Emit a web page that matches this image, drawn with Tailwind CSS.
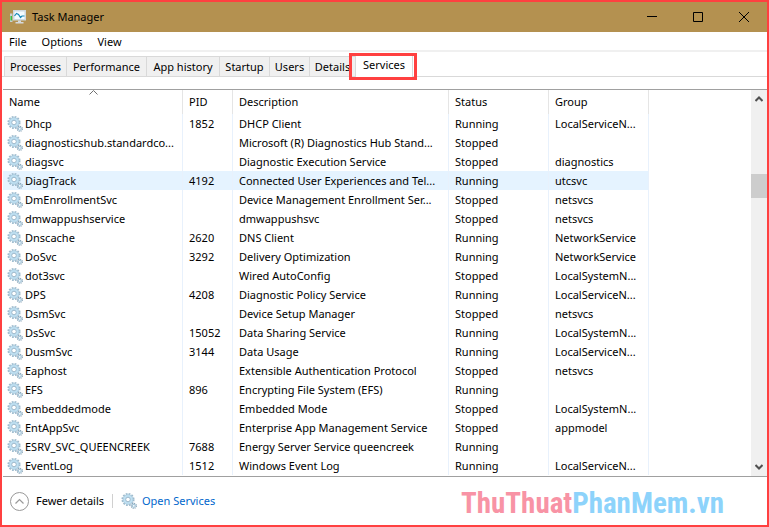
<!DOCTYPE html>
<html lang="en">
<head>
    <meta charset="UTF-8">
    <meta name="viewport" content="width=device-width, initial-scale=1.0">
    <title>Task Manager</title>
    <script src="https://cdn.jsdelivr.net/npm/@tailwindcss/browser@4"></script>
</head>
<body class="bg-white">
    <!-- shared gear icon -->
    <svg class="hidden">
        <symbol id="gear" viewBox="0 0 16 16">
            <circle cx="7" cy="6.5" r="5.7" fill="none" stroke="#9dbacd" stroke-width="1.7" stroke-dasharray="1.8 1.18"/>
            <circle cx="7" cy="6.5" r="3.8" fill="none" stroke="#bfe0f2" stroke-width="2.6"/>
            <circle cx="7" cy="6.5" r="4.9" fill="none" stroke="#9fc0d4" stroke-width=".6"/>
            <circle cx="7" cy="6.5" r="2.3" fill="#fff" stroke="#7fa3bc" stroke-width=".8"/>
            <circle cx="12.8" cy="12.8" r="2.5" fill="none" stroke="#8ba5b8" stroke-width="1.3" stroke-dasharray="1.1 .86"/>
            <circle cx="12.8" cy="12.8" r="1.5" fill="#fff" stroke="#a5c6da" stroke-width="1.2"/>
        </symbol>
    </svg>

    <div class="flex min-h-screen flex-col border-2 border-[#ff4040] bg-white font-['Noto_Sans','Open_Sans',sans-serif] text-[11px] leading-4 text-black">
        <header class="flex h-[30px] items-center bg-[#b49150] pl-2">
            <svg class="h-4 w-4 shrink-0" viewBox="0 0 16 16">
                <path d="M0 4.500h2.500v8.500H0z" fill="#c9cfd2"/>
                <path d="M.5 7h1.500v4.500H.5z" fill="#33c241"/>
                <path d="M3 1h13v10.500H3z" fill="#cfd8dd"/>
                <path d="M4.500 2.500h10v7.500h-10z" fill="#f3fbff"/>
                <path d="M4.500 7 6.500 4.500l2 1 2 3 1.500-1.500h2.500" fill="none" stroke="#1686b5" stroke-width="1.200"/>
                <path d="M8 11.500h3V13h2.500v1.500H5.500V13H8z" fill="#d5dadd"/>
            </svg>
            <h1 class="ml-1.5">Task Manager</h1>
            <div class="ml-auto flex h-full">
                <button class="flex w-[46px] items-center justify-center" aria-label="Minimize">
                    <svg class="h-[10px] w-[10px]" viewBox="0 0 10 10" stroke="#000"><path d="M0 4.500h10"/></svg>
                </button>
                <button class="flex w-[46px] items-center justify-center" aria-label="Maximize">
                    <svg class="h-[10px] w-[10px]" viewBox="0 0 10 10" fill="none" stroke="#000"><path d="M.5.5h9v9h-9z"/></svg>
                </button>
                <button class="flex w-[46px] items-center justify-center" aria-label="Close">
                    <svg class="h-[10px] w-[10px]" viewBox="0 0 10 10" stroke="#000"><path d="M0 0l10 10M10 0L0 10"/></svg>
                </button>
            </div>
        </header>

        <nav class="flex h-5 items-center gap-[15px] border-b-2 border-[#f0f0f0] pt-0.5 pl-[7px]">
            <button>File</button>
            <button>Options</button>
            <button>View</button>
        </nav>

        <div class="flex h-[25px] shrink-0 items-end border-b border-[#d9d9d9] pl-0.5" role="tablist">
            <button role="tab" class="h-5 w-[63px] border border-b-0 border-[#d9d9d9] bg-[#f0f0f0]">Processes</button>
            <button role="tab" class="h-5 w-20 border-t border-r border-[#d9d9d9] bg-[#f0f0f0]">Performance</button>
            <button role="tab" class="h-5 w-[73px] border-t border-r border-[#d9d9d9] bg-[#f0f0f0]">App history</button>
            <button role="tab" class="h-5 w-[50px] border-t border-r border-[#d9d9d9] bg-[#f0f0f0]">Startup</button>
            <button role="tab" class="h-5 w-10 border-t border-r border-[#d9d9d9] bg-[#f0f0f0]">Users</button>
            <button role="tab" class="h-5 w-[46px] border-t border-r border-[#d9d9d9] bg-[#f0f0f0]">Details</button>
            <div class="relative -mb-px h-6">
                <button role="tab" aria-selected="true" class="h-6 w-[57px] border-r border-[#d9d9d9] bg-white">Services</button>
                <span class="pointer-events-none absolute top-0 -right-1 -bottom-[3px] -left-[7px] border-3 border-[#ff4040]"></span>
            </div>
        </div>

        <main class="mt-3 ml-px flex flex-1 border-y border-[#a0a0a0]">
            <div class="min-w-0 flex-1 overflow-hidden">
                <table class="w-[646px] table-fixed border-separate border-spacing-0 text-left whitespace-nowrap">
                    <thead>
                        <tr class="h-6">
                            <th class="relative w-[180px] border-r border-[#e5e5e5] px-1.5 py-0 font-normal">Name
                                <svg class="absolute top-0 left-[86px] h-[5px] w-[9px]" viewBox="0 0 9 5" fill="none" stroke="#707070"><path d="M.5 4.500l4-4 4 4"/></svg>
                            </th>
                            <th class="w-[50px] border-r border-[#e5e5e5] px-1.5 py-0 font-normal">PID</th>
                            <th class="w-[216px] border-r border-[#e5e5e5] px-1.5 py-0 font-normal">Description</th>
                            <th class="w-[100px] border-r border-[#e5e5e5] px-1.5 py-0 font-normal">Status</th>
                            <th class="w-[100px] border-r border-[#e5e5e5] px-1.5 py-0 font-normal">Group</th>
                        </tr>
                    </thead>
                    <tbody id="services"></tbody>
                </table>
            </div>
            <div class="flex w-4 shrink-0 flex-col items-center bg-[#f0f0f0]">
                <svg class="mt-1.5 h-[6px] w-2" viewBox="0 0 8 6" fill="none" stroke="#505050" stroke-width="2"><path d="M.5 5L4 1.500 7.500 5"/></svg>
                <div class="mt-[72px] h-6 w-full bg-[#cdcdcd]"></div>
                <svg class="mt-auto mb-1.5 h-[6px] w-2" viewBox="0 0 8 6" fill="none" stroke="#505050" stroke-width="2"><path d="M.5 1L4 4.500 7.500 1"/></svg>
            </div>
        </main>

        <footer class="flex h-12 shrink-0 items-center pl-2">
            <button class="flex items-center gap-[7px]">
                <svg class="h-[19px] w-[19px]" viewBox="0 0 19 19" fill="none" stroke="#999"><circle cx="9.500" cy="9.500" r="9"/><path d="M5.500 11.500l4-4 4 4" stroke-width="1.200"/></svg>
                Fewer details
            </button>
            <span class="mx-2 h-[14px] w-px bg-[#d0d0d0]"></span>
            <a href="#" class="flex items-center gap-[5px] text-[#0066cc]">
                <svg class="h-4 w-4"><use href="#gear"/></svg>
                Open Services
            </a>
            <p class="mr-[43px] ml-auto pt-1 font-['Roboto_Condensed','Roboto','Liberation_Sans',sans-serif] text-[29px] leading-8 font-bold text-[#8dd3fb]"><span class="text-[#f893a5]">ThuThuat</span>PhanMem.vn</p>
        </footer>
    </div>

    <script>
        const services = [
            ['Dhcp', '1852', 'DHCP Client', 'Running', 'LocalServiceN...'],
            ['diagnosticshub.standardco...', '', 'Microsoft (R) Diagnostics Hub Stand...', 'Stopped', ''],
            ['diagsvc', '', 'Diagnostic Execution Service', 'Stopped', 'diagnostics'],
            ['DiagTrack', '4192', 'Connected User Experiences and Tel...', 'Running', 'utcsvc'],
            ['DmEnrollmentSvc', '', 'Device Management Enrollment Ser...', 'Stopped', 'netsvcs'],
            ['dmwappushservice', '', 'dmwappushsvc', 'Stopped', 'netsvcs'],
            ['Dnscache', '2620', 'DNS Client', 'Running', 'NetworkService'],
            ['DoSvc', '3292', 'Delivery Optimization', 'Running', 'NetworkService'],
            ['dot3svc', '', 'Wired AutoConfig', 'Stopped', 'LocalSystemN...'],
            ['DPS', '4208', 'Diagnostic Policy Service', 'Running', 'LocalServiceN...'],
            ['DsmSvc', '', 'Device Setup Manager', 'Stopped', 'netsvcs'],
            ['DsSvc', '15052', 'Data Sharing Service', 'Running', 'LocalSystemN...'],
            ['DusmSvc', '3144', 'Data Usage', 'Running', 'LocalServiceN...'],
            ['Eaphost', '', 'Extensible Authentication Protocol', 'Stopped', 'netsvcs'],
            ['EFS', '896', 'Encrypting File System (EFS)', 'Running', ''],
            ['embeddedmode', '', 'Embedded Mode', 'Stopped', 'LocalSystemN...'],
            ['EntAppSvc', '', 'Enterprise App Management Service', 'Stopped', 'appmodel'],
            ['ESRV_SVC_QUEENCREEK', '7688', 'Energy Server Service queencreek', 'Running', ''],
            ['EventLog', '1512', 'Windows Event Log', 'Running', 'LocalServiceN...']
        ];
        const selected = 'DiagTrack';

        document.getElementById('services').innerHTML = services.map(([name, ...cells]) => `
            <tr class="h-[19px] ${name === selected ? 'bg-[#e5f3ff]' : ''}">
                <td class="border-r border-[#e8f1fc] p-0 pl-1">
                    <div class="flex items-center gap-0.5"><svg class="h-4 w-4 shrink-0"><use href="#gear"/></svg>${name}</div>
                </td>
                ${cells.map(cell => `<td class="border-r border-[#e8f1fc] px-1.5 py-0">${cell}</td>`).join('')}
            </tr>`).join('');
    </script>
</body>
</html>
